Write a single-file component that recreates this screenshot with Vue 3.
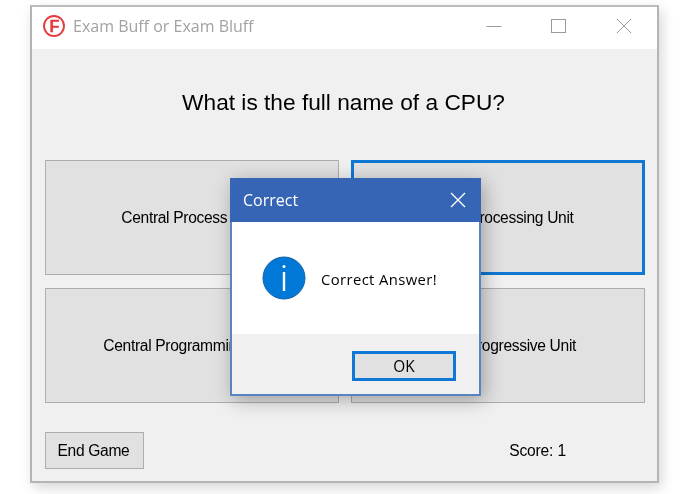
<script setup>
const answers = [
  { label: 'Central Process Unit', focused: false },
  { label: 'Central Processing Unit', focused: true },
  { label: 'Central Programming Unit', focused: false },
  { label: 'Central Progressive Unit', focused: false }
]
</script>

<template>
  <div class="page">
    <div class="window">
      <header class="titlebar">
        <svg class="app-icon" width="24" height="24" viewBox="0 0 24 24">
          <circle cx="12" cy="12" r="10" fill="#fff" stroke="#e63b40" stroke-width="1.9" />
          <text x="12.3" y="17.6" text-anchor="middle" class="app-letter">F</text>
        </svg>
        <span class="app-title">Exam Buff or Exam Bluff</span>
        <div class="controls">
          <svg class="minimize" width="16" height="16" viewBox="0 0 16 16"><path d="M0.5 8.5H15.5" stroke="#9a9a9a" fill="none" /></svg>
          <svg width="16" height="16" viewBox="0 0 16 16"><rect x="1.5" y="1.5" width="14" height="13" stroke="#9a9a9a" fill="none" /></svg>
          <svg width="16" height="16" viewBox="0 0 16 16"><path d="M1 1L15 15M15 1L1 15" stroke="#9a9a9a" fill="none" /></svg>
        </div>
      </header>
      <main class="content">
        <h1 class="question">What is the full name of a CPU?</h1>
        <div class="answers">
          <button
            v-for="a in answers"
            :key="a.label"
            class="answer"
            :class="{ focused: a.focused }"
          >{{ a.label }}</button>
        </div>
        <footer class="bottom">
          <button class="end">End Game</button>
          <span class="score">Score: 1</span>
        </footer>
      </main>
      <section class="dialog">
        <div class="dialog-title">
          <span>Correct</span>
          <svg width="16" height="16" viewBox="0 0 16 16"><path d="M1 1L15 15M15 1L1 15" stroke="#fff" stroke-width="1.4" fill="none" /></svg>
        </div>
        <div class="dialog-body">
          <svg width="44" height="44" viewBox="0 0 44 44">
            <circle cx="22" cy="22" r="21" fill="#0078d7" stroke="#1563a8" stroke-width="1" />
            <circle cx="22" cy="10.5" r="1.5" fill="#fff" />
            <rect x="20.8" y="16" width="2.4" height="19" fill="#fff" />
          </svg>
          <span class="message">Correct Answer!</span>
        </div>
        <div class="dialog-foot">
          <button class="ok">OK</button>
        </div>
      </section>
    </div>
  </div>
</template>

<style>
html, body { margin: 0; background: #fff; }
</style>

<style scoped>
.page {
  width: 695px;
  height: 494px;
  padding: 5px 0 0 30px;
  box-sizing: border-box;
  overflow: hidden;
  background: #fff;
  filter: blur(0.3px);
}
.window {
  position: relative;
  width: 629px;
  height: 478px;
  box-sizing: border-box;
  border: 2px solid #b4b4b4;
  border-top-color: #bcbcbc;
  background: #f0f0f0;
  box-shadow: 3px 5px 12px rgba(0, 0, 0, 0.16);
  display: flex;
  flex-direction: column;
  font-family: "Liberation Sans", Arial, sans-serif;
}
.titlebar {
  height: 42px;
  box-sizing: border-box;
  background: #fff;
  display: flex;
  align-items: center;
  padding: 0 25px 4px 10px;
  flex: none;
}
.app-icon { flex: none; }
.app-letter {
  font-family: "Liberation Sans", Arial, sans-serif;
  font-weight: 700;
  font-size: 16px;
  fill: #e63b40;
  stroke: #e63b40;
  stroke-width: 0.4px;
}
.app-title {
  margin-left: 7px;
  font-family: "Open Sans", sans-serif;
  font-size: 16px;
  color: #a2a2a2;
}
.controls {
  margin-left: auto;
  display: flex;
  gap: 50px;
}
.controls svg { display: block; }
.controls .minimize { margin-right: -2px; }
.content {
  flex: 1;
  display: flex;
  flex-direction: column;
  padding: 0 13px 0 13px;
}
.question {
  margin: 0;
  height: 111px;
  line-height: 107px;
  padding-right: 2px;
  text-align: center;
  font-size: 22.7px;
  font-weight: 400;
  color: #000;
}
.answers {
  display: grid;
  grid-template-columns: 294px 294px;
  grid-auto-rows: 115px;
  column-gap: 12px;
  row-gap: 13px;
}
button {
  font-family: "Liberation Sans", Arial, sans-serif;
  color: #000;
  background: #e1e1e1;
  border: 1px solid #adadad;
  padding: 0;
  box-sizing: border-box;
}
.answer {
  font-size: 15.6px;
  letter-spacing: -0.33px;
  padding-right: 5px;
  padding-top: 1px;
}
.answer.focused { border: 3px solid #0f78d4; }
.bottom {
  display: flex;
  align-items: center;
  justify-content: space-between;
  margin-top: 29px;
  height: 37px;
}
.end {
  width: 99px;
  height: 37px;
  font-size: 15.6px;
  letter-spacing: -0.33px;
  padding-right: 2px;
}
.score {
  font-size: 15.6px;
  letter-spacing: -0.15px;
  color: #000;
  margin-right: 78px;
}
.dialog {
  position: absolute;
  left: 198px;
  top: 171px;
  width: 251px;
  height: 218px;
  box-sizing: border-box;
  border: 2px solid #5a84bf;
  border-top: 0;
  background: #fff;
  display: flex;
  flex-direction: column;
  box-shadow: 3px 4px 18px rgba(0, 0, 0, 0.3);
}
.dialog-title {
  height: 44px;
  margin: 0 -2px;
  flex: none;
  background: #3565b4;
  color: #fff;
  display: flex;
  align-items: center;
  justify-content: space-between;
  padding: 0 15px 0 13px;
  font-family: "Open Sans", sans-serif;
  font-size: 16px;
}
.dialog-body {
  flex: 1;
  display: flex;
  align-items: center;
  padding: 0 0 0 30px;
  gap: 15px;
}
.dialog-body svg { flex: none; }
.message {
  font-family: "Open Sans", sans-serif;
  font-size: 14.8px;
  letter-spacing: 0.4px;
  color: #000;
  padding-top: 2px;
}
.dialog-foot {
  flex: none;
  height: 60px;
  background: #f0f0f0;
  display: flex;
  justify-content: flex-end;
  align-items: flex-start;
  padding: 17px 23px 0 0;
  box-sizing: border-box;
}
.ok {
  width: 104px;
  height: 30px;
  border: 3px solid #0f78d4;
  font-family: "Open Sans", sans-serif;
  font-size: 15.4px;
}
</style>
